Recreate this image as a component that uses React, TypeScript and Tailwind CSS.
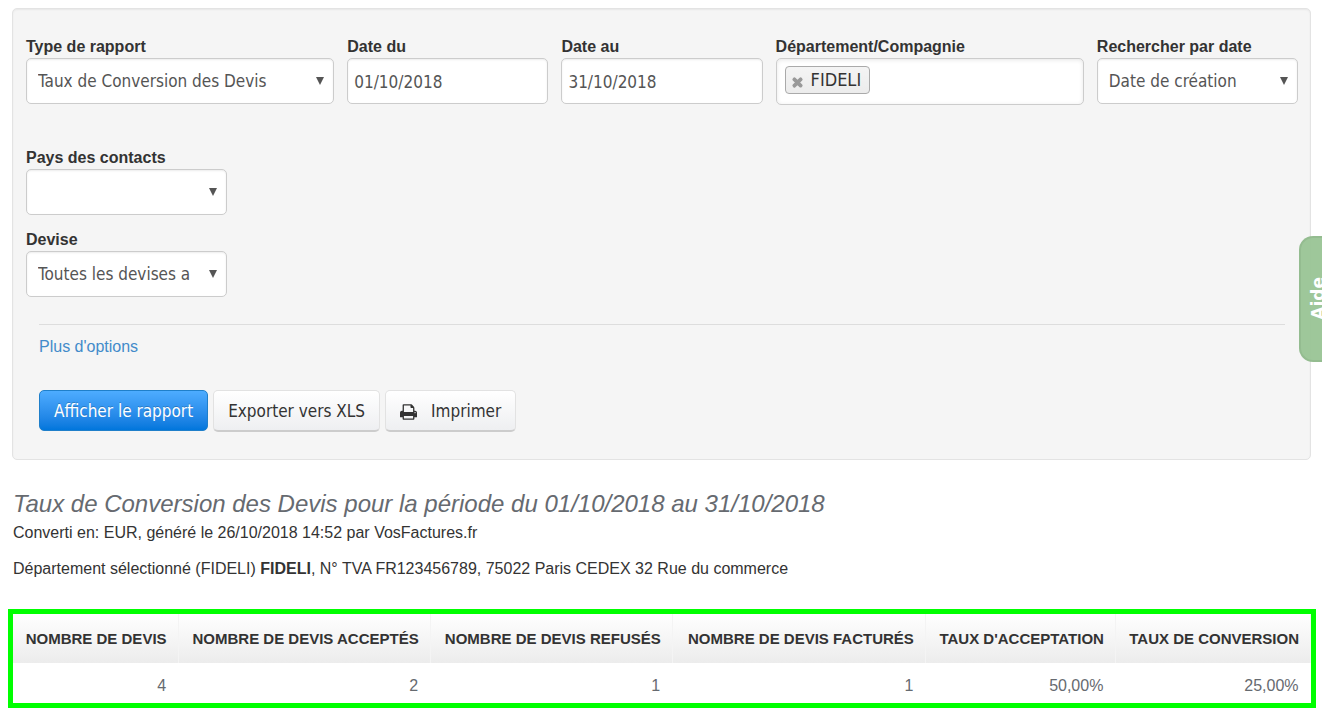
import type { ReactNode } from "react";
import { FaTimes } from "react-icons/fa";

const control =
  "block w-full h-[46px] rounded-[5px] border border-[#cccccc] bg-white pt-0.5 font-['DejaVu_Sans_Condensed','Open_Sans',sans-serif] text-[17px] text-[#555555] shadow-[inset_0_1px_2px_rgba(0,0,0,0.08)] outline-none";

const greyButton =
  "flex h-[42px] cursor-pointer items-center rounded-[5px] border border-[#e2e2e2] border-b-2 border-b-[#cccccc] bg-linear-to-b from-white to-[#eeeff1] px-3.5 pt-0.5 font-['DejaVu_Sans_Condensed','Open_Sans',sans-serif] text-[17px] text-[#333333]";

function Field({ id, label, span, children }: { id: string; label: string; span: string; children: ReactNode }) {
  return (
    <div className={span}>
      <label htmlFor={id} className="block h-6 pt-0.5 text-base leading-[22px] font-bold whitespace-nowrap">
        {label}
      </label>
      {children}
    </div>
  );
}

function Select({ id, value }: { id: string; value: string }) {
  return (
    <div className="relative">
      <select id={id} className={`${control} appearance-none pr-8 pl-[11px]`}>
        <option>{value}</option>
      </select>
      <svg viewBox="0 0 8 8" className="pointer-events-none absolute top-[19px] right-2.5 size-2 fill-[#555555]">
        <path d="M0 0h8L4 8z" />
      </svg>
    </div>
  );
}

function PrinterIcon() {
  return (
    <svg viewBox="0 128 1664 1536" className="mr-3.5 h-4 w-[17px]" fill="currentColor">
      <path d="M384 1536h896v-256h-896v256zM384 896h896v-384h-160q-40 0-68-28t-28-68v-160h-640v640zM1536 960q0-26-19-45t-45-19-45 19-19 45 19 45 45 19 45-19 19-45zM1664 960v416q0 13-9.5 22.5t-22.5 9.5h-224v160q0 40-28 68t-68 28h-960q-40 0-68-28t-28-68v-160h-224q-13 0-22.5-9.500t-9.500-22.500v-416q0-79 56.500-135.500t135.500-56.500h64v-544q0-40 28-68t68-28h672q40 0 88 20t76 48l152 152q28 28 48 76t20 88v256h64q79 0 135.500 56.500t56.500 135.500z" />
    </svg>
  );
}

const columns = [
  { title: "Nombre de devis", value: "4", width: "w-[165px]" },
  { title: "Nombre de devis acceptés", value: "2", width: "w-[252px]" },
  { title: "Nombre de devis refusés", value: "1", width: "w-[242px]" },
  { title: "Nombre de devis facturés", value: "1", width: "w-[253px]" },
  { title: "Taux d'acceptation", value: "50,00%", width: "w-[190px]" },
  { title: "Taux de conversion", value: "25,00%", width: "w-[195px]" },
];

export default function App() {
  return (
    <div className="bg-white pt-2 font-['Liberation_Sans',Arial,sans-serif] text-base text-[#333333]">
      <form
        onSubmit={(e) => e.preventDefault()}
        className="mr-[11px] ml-3 rounded-[5px] border border-[#e3e3e3] bg-[#f5f5f5] pt-[25px] pr-3 pb-[27px] pl-[13px] shadow-[inset_0_1px_2px_rgba(0,0,0,0.06)]"
      >
        <div className="grid grid-cols-12 gap-x-[13px]">
          <Field id="type" label="Type de rapport" span="col-span-3">
            <Select id="type" value="Taux de Conversion des Devis" />
          </Field>
          <Field id="from" label="Date du" span="col-span-2">
            <input id="from" type="text" defaultValue="01/10/2018" className={`${control} px-1.5`} />
          </Field>
          <Field id="to" label="Date au" span="col-span-2">
            <input id="to" type="text" defaultValue="31/10/2018" className={`${control} px-1.5`} />
          </Field>
          <Field id="department" label="Département/Compagnie" span="col-span-3">
            <div className="flex h-[47px] items-start gap-2 rounded-[5px] border border-[#cccccc] bg-white px-2 pt-[7px] shadow-[inset_0_1px_4px_rgba(0,0,0,0.1)]">
              <span className="flex h-7 items-center gap-[7px] rounded-[4px] border border-[#aaaaaa] bg-linear-to-b from-[#f4f4f4] to-[#ececec] pr-2 pl-[5px] font-['DejaVu_Sans_Condensed','Open_Sans',sans-serif] text-lg leading-6">
                <button type="button" aria-label="Retirer FIDELI" className="mt-1 cursor-pointer text-[#999999]">
                  <FaTimes size={13} strokeWidth={50} stroke="currentColor" />
                </button>
                FIDELI
              </span>
              <input id="department" type="text" className="h-7 min-w-0 flex-1 outline-none" />
            </div>
          </Field>
          <Field id="search" label="Rechercher par date" span="col-span-2">
            <Select id="search" value="Date de création" />
          </Field>
        </div>

        <div className="mt-10 grid grid-cols-12 gap-x-[13px] gap-y-3">
          <Field id="country" label="Pays des contacts" span="col-span-2 col-start-1">
            <Select id="country" value="" />
          </Field>
          <Field id="currency" label="Devise" span="col-span-2 col-start-1">
            <Select id="currency" value="Toutes les devises a" />
          </Field>
        </div>

        <div className="mx-[13px] mt-[27px] border-t border-[#dddddd] pt-2.5">
          <a href="#" className="inline-block leading-6 text-[#428bca]">
            Plus d'options
          </a>
          <div className="mt-[31px] flex items-start gap-[5px]">
            <button
              type="submit"
              className="flex h-[41px] cursor-pointer items-center rounded-[5px] border border-[#1f7fca] bg-linear-to-b from-[#4dacff] to-[#0076dc] px-3.5 pt-0.5 font-['DejaVu_Sans_Condensed','Open_Sans',sans-serif] text-[17px] text-white [text-shadow:0_-1px_0_rgba(0,0,0,0.2)]"
            >
              Afficher le rapport
            </button>
            <button type="button" className={greyButton}>
              Exporter vers XLS
            </button>
            <button type="button" className={greyButton}>
              <PrinterIcon />
              Imprimer
            </button>
          </div>
        </div>
      </form>

      <main>
        <header className="mt-[29px] px-[13px]">
          <h1 className="text-2xl leading-[30px] text-[#666a70] italic">
            Taux de Conversion des Devis pour la période du 01/10/2018 au 31/10/2018
          </h1>
          <p className="mt-0.5 leading-6">Converti en: EUR, généré le 26/10/2018 14:52 par VosFactures.fr</p>
          <p className="mt-3 leading-6">
            Département sélectionné (FIDELI) <strong>FIDELI</strong>, N° TVA FR123456789, 75022 Paris CEDEX 32 Rue du
            commerce
          </p>
        </header>

        <div className="mt-7 mr-1.5 ml-2 border-5 border-[#00ff00]">
          <table className="w-full table-fixed border-collapse text-right">
            <thead>
              <tr className="h-[49px] bg-linear-to-b from-white to-[#ececec]">
                {columns.map((c) => (
                  <th
                    key={c.title}
                    scope="col"
                    className={`${c.width} border-r border-[#f4f4f4] pr-[11px] text-[15px] leading-5 whitespace-nowrap uppercase`}
                  >
                    {c.title}
                  </th>
                ))}
              </tr>
            </thead>
            <tbody>
              <tr className="h-10">
                {columns.map((c) => (
                  <td key={c.title} className="pt-1.5 pr-3 leading-6 text-[#666a70]">
                    {c.value}
                  </td>
                ))}
              </tr>
            </tbody>
          </table>
        </div>
      </main>

      <button
        type="button"
        className="fixed top-[236px] right-0 flex h-[126px] w-[23px] cursor-pointer items-center overflow-hidden rounded-l-[14px] border-2 border-r-0 border-[#8fb98b] bg-[#99c495] pb-0.5 pl-[11px] font-['DejaVu_Sans',sans-serif] text-[17px] leading-3 font-bold text-white opacity-95"
      >
        <span className="shrink-0 rotate-180 [writing-mode:vertical-rl]">Aide</span>
      </button>
    </div>
  );
}
